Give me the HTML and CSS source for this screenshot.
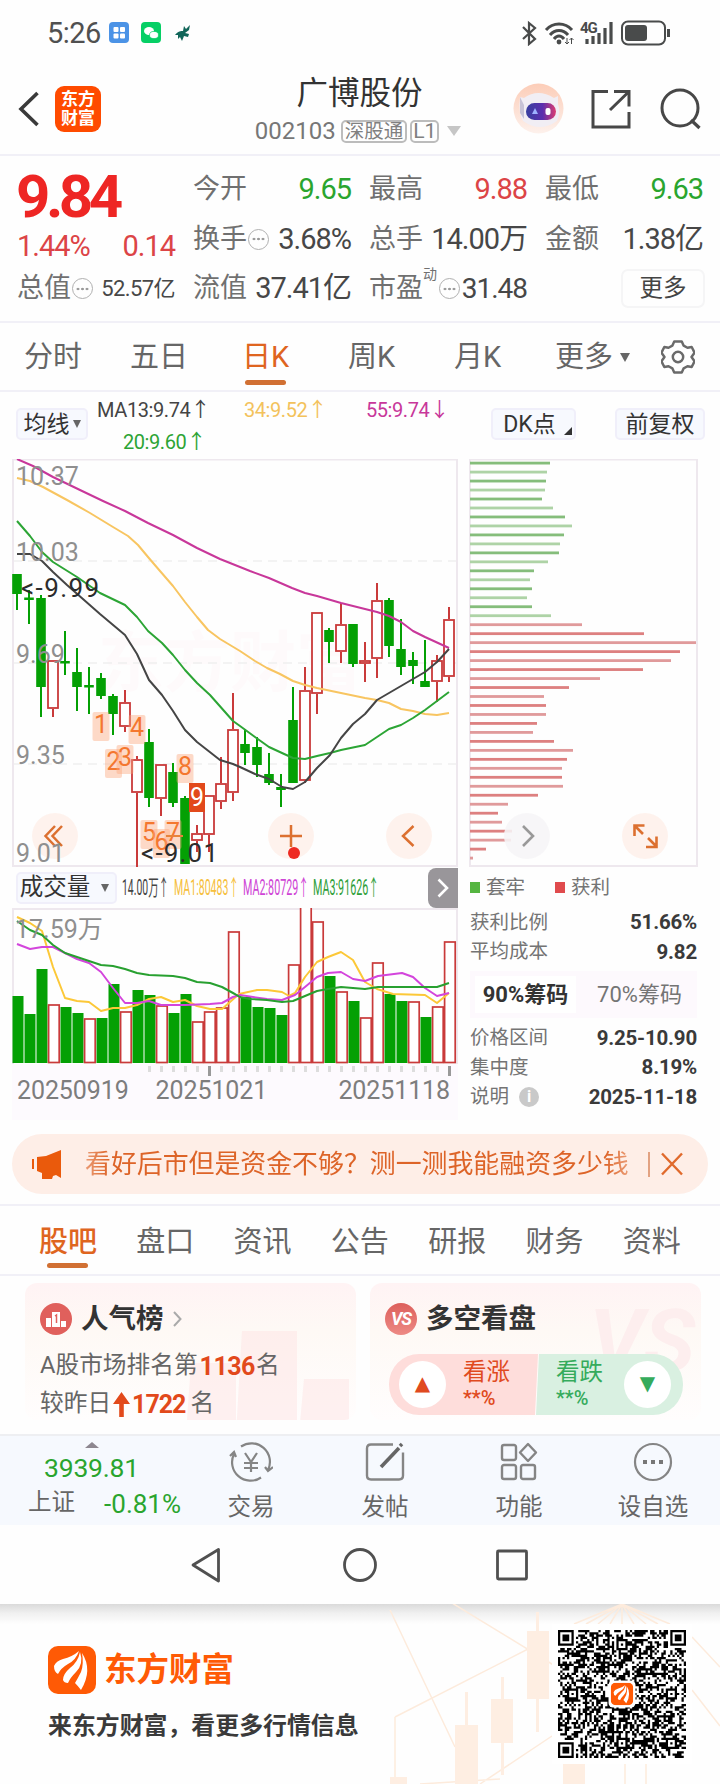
FILE: index.html
```html
<!DOCTYPE html>
<html lang="zh-CN">
<head>
  <meta charset="UTF-8">
  <meta name="viewport" content="width=device-width, initial-scale=1.0">
  <title>广博股份 002103</title>
  <link rel="stylesheet" href="styles.css">
</head>
<body>
  <div class="status">
    <span class="time">5:26</span>
    <svg class="app-icons" width="84" height="24" viewBox="0 0 84 24">
      <rect x="0" y="1" width="20" height="21" rx="4" fill="#4b93e6"/>
      <g fill="#fff"><rect x="4.500" y="6" width="5" height="5" rx="1"/><rect x="11" y="6" width="5" height="5" rx="1"/><rect x="4.500" y="12.500" width="5" height="5" rx="1"/><rect x="11" y="12.500" width="5" height="5" rx="1"/></g>
      <rect x="32" y="1" width="20" height="21" rx="4" fill="#06cf65"/>
      <ellipse cx="40" cy="10" rx="5" ry="4" fill="#fff"/><ellipse cx="45" cy="14" rx="4.500" ry="3.600" fill="#fff" stroke="#06cf65" stroke-width=".7"/>
      <path d="M66 14c3-4 6-4 8-4l1-5 2 3 4-4-1 5-4 3 4 1-1 3-4-1-2 5-2-4-2 2v-4z" fill="#12665a"/>
    </svg>
    <svg class="signal" width="150" height="26" viewBox="522 19 150 26" fill="none" stroke="#494b4b">
      <path d="M523 26l12 12-6 5V22l6 5-12 11" stroke-width="2.200"/>
      <path d="M546 29c7-8 19-8 26 0M550 34c5-6 13-6 18 0M554 38c3-4 7-4 10 0" stroke-width="3"/>
      <circle cx="559" cy="41" r="2.400" fill="#494b4b" stroke="none"/>
      <path d="M567 37v6m-2-2l2 2 2-2M571.500 43v-6m-2 2l2-2 2 2" stroke-width="1"/>
      <text x="580" y="32" class="net">4G</text>
      <path d="M587 43v-5M593 43v-8M599 43v-11M605 43V27M611 43V21" stroke-width="3.200"/>
      <rect x="622" y="20.500" width="43" height="23" rx="6" stroke-width="2"/>
      <rect x="625" y="24" width="22" height="16" rx="3" fill="#494b4b" stroke="none"/>
      <path d="M668.500 28v8" stroke-width="3"/>
    </svg>
  </div>

  <header class="header">
    <svg class="back" width="22" height="36" viewBox="0 0 22 36"><path d="M19.500 2L3 18l16.500 16" fill="none" stroke="#3a3a3a" stroke-width="3.600"/></svg>
    <div class="app-logo"><span>东方</span><span>财富</span></div>
    <div class="title">
      <h1>广博股份</h1>
      <div class="code"><span>002103</span><i>深股通</i><i class="level">L1</i><b class="caret"></b></div>
    </div>
    <svg class="actions" width="188" height="52" viewBox="513 84 188 52" fill="none" stroke="#474747">
      <defs>
        <linearGradient id="halo" x1="0" y1="0" x2="0" y2="1"><stop offset="0" stop-color="#fccdb8"/><stop offset="1" stop-color="#fdf1ec"/></linearGradient>
        <linearGradient id="visor"><stop offset="0" stop-color="#37409f"/><stop offset=".55" stop-color="#5b2fae"/><stop offset="1" stop-color="#dd3d70"/></linearGradient>
      </defs>
      <g stroke="none">
        <circle cx="538.500" cy="109.500" r="25" fill="url(#halo)"/>
        <path d="M520 98l4 1q14-10 30 0l4-2 0 8q3 8-1 17-17 12-34 0-5-8-3-24z" fill="#f1eef4"/>
        <path d="M520 98l4 8 0 14-4-6z" fill="#c7c3d6"/>
        <rect x="526" y="104" width="30" height="17" rx="8.500" fill="url(#visor)"/>
        <path d="M532 115l3-6 3 6z" fill="#9db2ff"/><rect x="545.500" y="109" width="5" height="7" rx="2" fill="#fff"/>
      </g>
      <path d="M608 92.500h-15v35.500h36v-15M614 92.500h15v15M629 92.500L610 111" stroke-width="3"/>
      <circle cx="680" cy="109" r="18" stroke-width="3"/>
      <path d="M691 121l8.500 8" stroke-width="3.200"/>
    </svg>
  </header>

  <section class="quote">
    <div class="cell price red">9.84</div>
    <div class="cell"><span>今开</span><em class="green">9.65</em></div>
    <div class="cell"><span>最高</span><em class="red">9.88</em></div>
    <div class="cell"><span>最低</span><em class="green">9.63</em></div>
    <div class="cell change"><em class="red">1.44%</em><em class="red">0.14</em></div>
    <div class="cell"><span>换手<u class="tip"></u></span><em>3.68%</em></div>
    <div class="cell"><span>总手</span><em>14.00万</em></div>
    <div class="cell"><span>金额</span><em>1.38亿</em></div>
    <div class="cell small"><span>总值<u class="tip"></u></span><em>52.57亿</em></div>
    <div class="cell"><span>流值</span><em>37.41亿</em></div>
    <div class="cell"><span>市盈<sup>动</sup><u class="tip"></u></span><em class="pe">31.48</em></div>
    <div class="cell end"><button class="more">更多</button></div>
  </section>

  <nav class="periods">
    <a>分时</a>
    <a>五日</a>
    <a class="on">日K</a>
    <a>周K</a>
    <a>月K</a>
    <a class="drop">更多<b class="caret"></b></a>
    <svg width="34" height="38" viewBox="-18 -19 36 38" fill="none" stroke="#6a6a6a" stroke-width="2.600" stroke-linejoin="round">
      <path d="M-4-16.500h8l2 4.500 4 2.200 4.500-.8 3 6-3.200 4.600 3.200 4.600-3 6-4.500-.8-4 2.200-2 4.500h-8l-2-4.500-4-2.200-4.500.8-3-6 3.200-4.600-3.200-4.600 3-6 4.500.8 4-2.200z"/>
      <circle r="5.500"/>
    </svg>
  </nav>

  <div class="averages">
    <button class="pill">均线<b class="caret"></b></button>
    <div class="ma-list">
      <span>MA13:9.74↑</span>
      <span class="ma34">34:9.52↑</span>
      <span class="ma55">55:9.74↓</span>
      <span class="ma20">20:9.60↑</span>
    </div>
    <button class="pill dk">DK点<b class="corner"></b></button>
    <button class="pill">前复权</button>
  </div>

  <main class="charts">
    <div class="left">
      <svg id="kline" width="446" height="408" viewBox="12 459 446 408"></svg>
      <div class="vol-head">
        <button class="pill">成交量<b class="caret"></b></button>
        <svg class="vol-ma" width="260" height="28" viewBox="120 875 260 28">
          <text x="122" y="896" textLength="47" lengthAdjust="spacingAndGlyphs" fill="#444">14.00万↑</text>
          <text x="174" y="896" textLength="65" lengthAdjust="spacingAndGlyphs" fill="#f6bf3c">MA1:80483↑</text>
          <text x="243" y="896" textLength="66" lengthAdjust="spacingAndGlyphs" fill="#cf45d6">MA2:80729↑</text>
          <text x="313" y="896" textLength="66" lengthAdjust="spacingAndGlyphs" fill="#2fa03a">MA3:91626↑</text>
        </svg>
        <div class="next"><svg width="12" height="20" viewBox="0 0 12 20"><path d="M1.500 1.500L10 10l-8.500 8.500" fill="none" stroke="#fff" stroke-width="2.600"/></svg></div>
      </div>
      <svg id="volume" width="446" height="156" viewBox="12 908 446 156"></svg>
      <div class="axis">
        <svg id="ticks" width="446" height="14" viewBox="12 1064 446 14"></svg>
        <div class="dates"><span>20250919</span><span>20251021</span><span>20251118</span></div>
      </div>
    </div>

    <div class="right">
      <svg id="chips" width="229" height="408" viewBox="469 459 229 408"></svg>
      <div class="legend"><i class="sq sq-green"></i>套牢<i class="sq sq-red"></i>获利</div>
      <div class="row"><span>获利比例</span><strong>51.66%</strong></div>
      <div class="row"><span>平均成本</span><strong>9.82</strong></div>
      <div class="switch"><span class="active">90%筹码</span><span>70%筹码</span></div>
      <div class="row"><span>价格区间</span><strong>9.25-10.90</strong></div>
      <div class="row"><span>集中度</span><strong>8.19%</strong></div>
      <div class="row"><span>说明<b class="info">i</b></span><strong>2025-11-18</strong></div>
    </div>
  </main>

  <div class="notice">
    <svg width="32" height="32" viewBox="0 0 32 32" fill="#ea5a0c"><path d="M1 11h2v10H1zM6 9l9-1 15-6v28l-5-3-3 1-1 3H11v-6l-5-2z"/></svg>
    <p>看好后市但是资金不够？测一测我能融资多少钱</p>
    <i class="bar"></i>
    <svg class="close" width="22" height="24" viewBox="0 0 22 24"><path d="M1 1.500l20 21M21 1.500l-20 21" stroke="#e06a2c" stroke-width="2.400"/></svg>
  </div>

  <nav class="tabs">
    <a class="on">股吧</a><a>盘口</a><a>资讯</a><a>公告</a><a>研报</a><a>财务</a><a>资料</a>
  </nav>

  <section class="cards">
    <div class="card rank">
      <svg class="ghost" width="190" height="137" viewBox="0 0 190 137"><path d="M25 66h45v71H20zM76 34h55v103H70zM138 82h45v55h-50z" fill="#fde4e3" opacity=".5"/></svg>
      <h2>
        <svg width="32" height="32" viewBox="0 0 32 32"><circle cx="16" cy="16" r="16" fill="#e0605c"/><path d="M6 15h5v9H6zM12 9h8v15h-8zM21 18h5v6h-5z" fill="#fff"/><path d="M15 13l1.500-1v8" fill="none" stroke="#e0605c" stroke-width="1.500"/></svg>
        人气榜
        <svg class="arrow" width="9" height="16" viewBox="0 0 9 16"><path d="M1 1l6.500 7L1 15" fill="none" stroke="#aaa" stroke-width="2"/></svg>
      </h2>
      <p>A股市场排名第<b>1136</b>名</p>
      <p class="delta">较昨日<svg width="17" height="25" viewBox="0 0 17 25"><path d="M8.500 0L17 12h-6.200v13H6.200V12H0z" fill="#e2491b"/></svg><b>1722</b>名</p>
    </div>
    <div class="card">
      <span class="ghost ghost-vs">VS</span>
      <h2><span class="vs">VS</span>多空看盘</h2>
      <div class="vote">
        <div class="up"><i>▲</i><span>看涨<small>**%</small></span></div>
        <div class="down"><span>看跌<small>**%</small></span><i>▼</i></div>
      </div>
    </div>
  </section>

  <div class="toolbar">
    <div class="index">
      <b class="caret-up"></b>
      <span class="green">3939.81</span>
      <div><span>上证</span><span class="green">-0.81%</span></div>
    </div>
    <div class="tool">
      <svg width="44" height="40" viewBox="-22 -20 44 40" fill="none" stroke="#858585" stroke-width="2.200">
        <path d="M-10-15.500A18.500 18.500 0 0 1 17 8M10 15.500A18.500 18.500 0 0 1-17-8M22 5l-5 4-3-4M-21-6l4-4 2 5"/>
        <path d="M-6-9l6 9 6-9M0 0v10M-7 1h14M-7 6h14"/>
      </svg>
      交易
    </div>
    <div class="tool">
      <svg width="44" height="40" viewBox="-22 -20 44 40" fill="none" stroke="#858585" stroke-width="2.400">
        <path d="M8-17.500h-22q-4 0-4 4v27q0 4 4 4h28q4 0 4-4v-23"/>
        <path d="M-4 5L14-14" stroke="#666" stroke-width="3.600"/><path d="M15-16l2-2" stroke="#666" stroke-width="3.600"/>
      </svg>
      发帖
    </div>
    <div class="tool">
      <svg width="44" height="40" viewBox="-22 -20 44 40" fill="none" stroke="#858585" stroke-width="2.400">
        <rect x="-17" y="-17" width="14" height="15" rx="2"/><rect x="-17" y="3" width="14" height="14" rx="2"/><rect x="2" y="3" width="14" height="14" rx="2"/>
        <path d="M9-18l8 8.500-8 8.500-8-8.500z" stroke-linejoin="round"/>
      </svg>
      功能
    </div>
    <div class="tool">
      <svg width="44" height="40" viewBox="-22 -20 44 40"><circle r="18" fill="none" stroke="#858585" stroke-width="2.200"/><path d="M-10-2h4v4h-4zM-2-2h4v4h-4zM6-2h4v4h-4z" fill="#777"/></svg>
      设自选
    </div>
  </div>

  <div class="sysnav">
    <svg width="340" height="40" viewBox="190 1545 340 40" fill="none" stroke="#505050" stroke-width="2.800" stroke-linejoin="round">
      <path d="M218.500 1549.500v31.500L193 1565z"/>
      <circle cx="360" cy="1565" r="15.500"/>
      <rect x="497.500" y="1551" width="29" height="28" rx="1"/>
    </svg>
  </div>

  <footer class="footer">
    <svg class="decor" width="340" height="180" viewBox="380 1604 340 180">
      <g fill="none" stroke="#fdebdc" stroke-width="1.500">
        <path d="M452 1603L560 1669M395 1717L530 1648M480 1784L552 1736M390 1610L455 1747M395 1717v67M692 1690l28 36M692 1637l28 30M420 1784l80-5M625 1764v20M646 1764v20"/>
        <path d="M622 1604l-48 20M622 1604l-36 20M622 1604l-24 20M622 1604l-12 20M622 1604v20M622 1604l12 20M622 1604l24 20M622 1604l36 20M622 1604l48 20"/>
      </g>
      <g fill="#feeee2">
        <path d="M455 1725h23v59h-23zM465 1692h3v33h-3zM491 1699h22v44h-22zM501 1677h3v98h-3zM527 1631h22v68h-22zM536 1612h3v120h-3zM563 1764h22v20h-22zM390 1777h17v7h-17z"/>
      </g>
    </svg>
    <div class="brand">
      <div class="brand-name">
        <svg width="48" height="48" viewBox="0 0 48 48"><use href="#mark"/></svg>
        <strong>东方财富</strong>
      </div>
      <p>来东方财富，看更多行情信息</p>
    </div>
    <div class="qr">
      <svg width="128" height="128" viewBox="0 0 57 57">
        <defs>
          <g id="mark">
            <rect width="48" height="48" rx="10" fill="#ff5a05"/>
            <path d="M6 20q2-5 9-7 9-2 16-8-3 9-11 13-7 4-10 10-4-2-4-8zM15 34q0-6 7-12 8-6 10-16 4 12-4 20-6 6-8 11-4 0-5-3zM27 37q3-5 6-11 3-8 1-19 11 17-1 37-3-4-6-7z" fill="#fff"/>
          </g>
        </defs>
        <path id="qr-code"/>
        <rect x="22.500" y="22.500" width="12" height="12" rx="2" fill="#fff"/>
        <svg x="23.500" y="23.500" width="10" height="10" viewBox="0 0 48 48"><use href="#mark"/></svg>
      </svg>
    </div>
  </footer>

  <script src="script.js"></script>
</body>
</html>
```

FILE: styles.css
```css
* {
    box-sizing: border-box;
}

body {
    width: 720px;
    margin: 0;
    background: #fefefe;
    color: #444;
    font-family: Roboto, "Noto Sans CJK SC", sans-serif;
    line-height: 1;
}

h1, h2, p {
    margin: 0;
    font-weight: normal;
}

i, em {
    font-style: normal;
}

button {
    padding: 0;
    border: 0;
    background: none;
    color: inherit;
    font: inherit;
}

svg {
    display: block;
    flex: none;
}

.red { color: #dc4446; }
.green { color: #2aa52e; }

.caret {
    border: 5px solid transparent;
    border-top: 9px solid #666;
    border-bottom: 0;
}

/* status bar */

.status {
    display: flex;
    align-items: center;
    height: 60px;
    padding: 6px 48px 0 47px;
}

.time {
    width: 62px;
    font-size: 29px;
    letter-spacing: -0.5px;
    color: #505050;
}

.signal {
    margin-left: auto;
}

.net {
    fill: #494b4b;
    stroke: none;
    font-size: 15px;
    font-weight: bold;
    letter-spacing: -1px;
}

/* header */

.header {
    display: flex;
    align-items: center;
    height: 96px;
    padding: 3px 19px 0 18px;
    border-bottom: 2px solid #f1f0f7;
}

.app-logo {
    display: flex;
    flex-direction: column;
    justify-content: center;
    width: 46px;
    height: 46px;
    margin-left: 15px;
    border-radius: 9px;
    background: #ff4b00;
    color: #fff;
    font-size: 17px;
    font-weight: bold;
    line-height: 19px;
    text-align: center;
}

.title {
    display: flex;
    flex-direction: column;
    align-items: center;
    flex: 1;
    padding: 7px 1px 0 106px;
}

.title h1 {
    font-size: 31.5px;
    line-height: 38px;
    color: #333;
}

.code {
    display: flex;
    align-items: center;
    height: 36px;
    margin-left: -3px;
    font-size: 24px;
    color: #777;
}

.code span {
    margin-right: 5px;
}

.code i {
    height: 23px;
    margin-right: 3px;
    padding: 0 2px;
    border: 2px solid #bcbcbc;
    border-radius: 5px;
    font-size: 19.5px;
    line-height: 19px;
    color: #808080;
}

.code .level {
    padding: 0 1px;
    font-size: 21px;
}

.code .caret {
    margin-left: 5px;
    border-width: 10px 7px 0;
    border-top-color: #c6c6c6;
}

/* quote */

.quote {
    display: grid;
    grid-template-columns: repeat(4, 158px);
    grid-template-rows: repeat(3, 49.5px);
    column-gap: 18px;
    height: 167px;
    padding: 9px 17px 0;
    border-bottom: 2px solid #f1f0f7;
}

.cell {
    display: flex;
    align-items: center;
    justify-content: space-between;
    white-space: nowrap;
    font-size: 27px;
    color: #707070;
}

.cell span {
    display: flex;
    align-items: center;
}

.cell em {
    font-size: 29px;
    letter-spacing: -1px;
    color: #474747;
}

.cell em.red { color: #dc4446; }
.cell em.green { color: #2aa52e; }

.cell.price {
    padding-top: 15px;
    font-size: 60px;
    font-weight: 700;
    letter-spacing: -4.5px;
    text-indent: -1px;
    color: #ee2624;
}

.cell.change {
    padding-top: 14px;
}

.cell.small em {
    font-size: 22px;
    letter-spacing: -0.6px;
}

.cell.end {
    justify-content: flex-end;
}

.cell .pe {
    font-size: 28px;
}

.cell sup {
    align-self: flex-start;
    margin-top: -8px;
    font-size: 14px;
    line-height: 14px;
}

.tip {
    width: 21px;
    height: 21px;
    margin: 0 0 0 1px;
    border: 1.500px solid #b0b0b0;
    border-radius: 50%;
    background: radial-gradient(circle, #999 1px, transparent 1.600px) center / 4.500px 18px repeat-x content-box;
    padding: 0 2px;
}

.cell sup + .tip {
    margin-left: 2px;
}

.more {
    width: 84px;
    height: 39px;
    margin-right: -2px;
    border: 2px solid #f5f5f6;
    border-radius: 7px;
    font-size: 23.5px;
    color: #444;
}

/* period tabs */

.periods {
    display: flex;
    align-items: center;
    height: 69px;
    padding: 1px 0 0 24px;
    border-bottom: 2px solid #f1f0f7;
    font-size: 29px;
    color: #666;
}

.periods a {
    position: relative;
    width: 106px;
    padding-top: 1px;
}

.periods a:nth-child(2) {
    width: 112px;
}

.periods a:nth-child(5) {
    width: 101px;
}

.periods .drop {
    display: flex;
    align-items: center;
    gap: 7px;
}

.on {
    color: #df651f;
}

.periods .on::after,
.tabs .on::after {
    content: "";
    position: absolute;
    left: 3px;
    bottom: -13px;
    width: 41px;
    height: 5px;
    border-radius: 3px;
    background: #d17033;
}

/* moving average row */

.averages {
    display: flex;
    align-items: flex-start;
    height: 67px;
    padding: 16px 15px 0 16px;
}

.pill {
    display: flex;
    align-items: center;
    justify-content: center;
    gap: 3px;
    width: 72px;
    height: 32px;
    border: 2px solid #f0effa;
    border-radius: 5px;
    background: #f7f9fe;
    font-size: 23px;
    color: #333;
    white-space: nowrap;
}

.pill .caret {
    border-width: 8px 4px 0;
}

.averages .pill:last-child {
    width: 90px;
}

.averages .dk {
    position: relative;
    width: 85px;
    margin-right: 39px;
    padding-right: 8px;
}

.corner {
    position: absolute;
    right: 2px;
    bottom: 3px;
    border-left: 8px solid transparent;
    border-bottom: 8px solid #333;
}

.ma-list {
    display: grid;
    grid-template-columns: 109px 121px 122px;
    row-gap: 12px;
    width: 394px;
    margin: -8px 0 0 9px;
    font-size: 20px;
    letter-spacing: -0.4px;
    text-align: right;
    white-space: nowrap;
}

.ma34 { color: #f3c25c; }
.ma55 { color: #c8379a; }
.ma20 { color: #2da435; }

/* charts */

.charts {
    display: flex;
    gap: 11px;
    height: 661px;
    padding-left: 12px;
}

.left {
    width: 446px;
}

.frame {
    fill: none;
    stroke: #eee8ee;
    stroke-width: 2;
}

.grid {
    stroke: #efefef;
    stroke-width: 1.500;
    stroke-dasharray: 9 6;
}

.watermark {
    fill: #fefafb;
    font-size: 66px;
    font-weight: bold;
}

.line {
    fill: none;
    stroke-width: 2;
    stroke-linejoin: round;
}

.label {
    fill: #8f8f8f;
    font-size: 25px;
}

.mark {
    fill: #2c2c2c;
    font-size: 26px;
}

.count {
    font-size: 25px;
    text-anchor: middle;
}

.vol-head {
    display: flex;
    align-items: center;
    height: 41px;
    padding-left: 4px;
}

.vol-head .pill {
    width: 101px;
    gap: 11px;
    padding-right: 4px;
    font-size: 23.5px;
}

.vol-ma {
    margin-left: 3px;
    overflow: visible;
    font-size: 22px;
}

.next {
    display: flex;
    align-items: center;
    justify-content: center;
    width: 30px;
    height: 40px;
    margin-left: auto;
    border-radius: 8px 0 0 8px;
    background: #99969a;
}

.axis {
    height: 56px;
    background: #fdfafe;
}

.dates {
    display: flex;
    padding: 0 0 0 5px;
    font-size: 25px;
    letter-spacing: -0.1px;
    color: #7d7d7d;
}

.dates span:nth-child(2) {
    margin-left: 27px;
}

.dates span:last-child {
    margin-left: auto;
    padding-right: 8px;
}

.right {
    width: 229px;
    font-size: 19.500px;
    color: #747474;
}

.legend {
    display: flex;
    align-items: center;
    height: 41px;
    padding-left: 1px;
}

.sq {
    width: 10px;
    height: 11px;
    margin-right: 6px;
}

.sq-green { background: #55b541; }
.sq-red { margin-left: 30px; background: #e04b4d; }

.row {
    display: flex;
    align-items: center;
    justify-content: space-between;
    height: 29.300px;
    padding: 0 1px;
}

.row strong {
    font-size: 20.5px;
    letter-spacing: -0.200px;
    color: #3a3a3a;
}

.row span {
    display: flex;
    align-items: center;
}

.info {
    width: 20px;
    height: 20px;
    margin-left: 10px;
    border-radius: 50%;
    background: #c9c9c9;
    color: #fff;
    font-size: 16px;
    line-height: 20px;
    text-align: center;
}

.switch {
    display: flex;
    align-items: center;
    height: 47px;
    margin: 4px 1px 6px;
    padding: 4px 5px;
    background: #fdf9fd;
    font-size: 22px;
}

.switch span {
    width: 116px;
    line-height: 37px;
    text-align: center;
}

.switch span + span {
    padding-left: 11px;
    white-space: nowrap;
}

.switch .active {
    width: 101px;
    background: #fff;
    color: #333;
    font-weight: bold;
}

/* notice */

.notice {
    display: flex;
    align-items: center;
    height: 60px;
    margin: 14px 12px 10px;
    padding-left: 19px;
    border-radius: 30px;
    background: #feeee7;
    color: #dd6428;
}

.notice p {
    width: 555px;
    margin-left: 22px;
    overflow: hidden;
    font-size: 25.900px;
    line-height: 40px;
    white-space: nowrap;
    -webkit-mask-image: linear-gradient(90deg, rgba(0, 0, 0, .6), #000 24px, #000 520px, rgba(0, 0, 0, .4));
    mask-image: linear-gradient(90deg, rgba(0, 0, 0, .6), #000 24px, #000 520px, rgba(0, 0, 0, .4));
}

.bar {
    width: 2px;
    height: 25px;
    margin: 0 11px 0 8px;
    background: #e2a282;
}

/* content tabs */

.tabs {
    display: flex;
    align-items: center;
    height: 72px;
    padding: 4px 0 0 39px;
    border-top: 2px solid #f1f0f7;
    border-bottom: 2px solid #f1f0f7;
    font-size: 29px;
    color: #666;
}

.tabs a {
    position: relative;
    width: 97.600px;
}

.tabs .on {
    color: #df651f;
    font-weight: 500;
}

.tabs .on::after {
    left: 8px;
    bottom: -11px;
}

/* cards */

.cards {
    display: flex;
    gap: 14px;
    height: 158px;
    padding: 7px 18px 0 25px;
}

.card {
    position: relative;
    width: 331px;
    height: 137px;
    padding: 20px 15px 0;
    overflow: hidden;
    border-radius: 12px;
    background: linear-gradient(#fff3f4, #fef9f5 35%, #fffdfd);
}

.card > * {
    position: relative;
}

.card .ghost {
    position: absolute;
    right: 0;
    top: 14px;
}

.card .ghost-vs {
    right: 6px;
    top: 16px;
    color: #fdeeee;
    font-size: 86px;
    font-style: italic;
    font-weight: bold;
}

.card h2 {
    display: flex;
    align-items: center;
    height: 32px;
    gap: 9px;
    font-size: 27.500px;
    font-weight: bold;
    color: #333;
}

.card p {
    display: flex;
    align-items: center;
    height: 38px;
    margin-top: 12px;
    font-size: 23.700px;
    color: #666;
    white-space: nowrap;
}

.card .delta {
    margin-top: 0;
}

.card p b {
    padding: 0 1px 0 2px;
    font-size: 25px;
    letter-spacing: -0.5px;
    color: #e2491b;
}

.card .delta b {
    padding-right: 5px;
    letter-spacing: -1px;
}

.card .delta svg {
    margin-left: 2px;
}

.vs {
    width: 32px;
    height: 32px;
    border-radius: 50%;
    background: linear-gradient(#dd5f5b, #ed8a85);
    color: #fff;
    font-size: 18px;
    font-style: italic;
    line-height: 32px;
    text-align: center;
    letter-spacing: -1px;
}

.vote {
    display: flex;
    height: 61px;
    margin: 19px -1px 0 4px;
    width: 294px;
}

.up, .down {
    display: flex;
    align-items: center;
    font-size: 23.500px;
}

.up {
    width: 149px;
    padding-left: 10px;
    gap: 17px;
    border-radius: 30px 0 0 30px;
    background: #fedddb;
    clip-path: polygon(0 0, 100% 0, 146px 100%, 0 100%);
    color: #e04a20;
}

.down {
    width: 148px;
    margin-left: -3px;
    padding-left: 21px;
    gap: 21px;
    border-radius: 0 30px 30px 0;
    background: #d9f0e1;
    clip-path: polygon(4px 0, 100% 0, 100% 100%, 1px 100%);
    color: #35ab5c;
}

.vote i {
    width: 47px;
    height: 47px;
    border-radius: 50%;
    background: #fff;
    font-family: "DejaVu Sans", sans-serif;
    font-size: 20px;
    line-height: 45px;
    text-align: center;
}

.vote small {
    display: block;
    margin-top: 3px;
    font-size: 20px;
    font-weight: 500;
}

/* bottom toolbar */

.toolbar {
    display: flex;
    height: 91px;
    border-top: 2px solid #eeeff2;
    background: #f6f9fe;
    font-size: 23.500px;
    color: #666;
}

.index {
    display: flex;
    flex-direction: column;
    width: 184px;
    padding: 6px 3px 0 28px;
}

.caret-up {
    width: 0;
    margin-left: 57px;
    border: 7px solid transparent;
    border-top: 0;
    border-bottom: 6px solid #8d8790;
}

.index > span {
    margin: 7px 0 0 16px;
    font-size: 26.5px;
    letter-spacing: -0.2px;
}

.index div {
    display: flex;
    justify-content: space-between;
    margin-top: 9px;
}

.index div .green {
    font-size: 26px;
}

.tool {
    display: flex;
    flex-direction: column;
    align-items: center;
    width: 134px;
    gap: 14px;
    padding-top: 6px;
}

.sysnav {
    display: flex;
    align-items: center;
    justify-content: center;
    height: 79px;
}

/* footer */

.footer {
    position: relative;
    display: flex;
    justify-content: space-between;
    height: 180px;
    padding: 20px 28px 0 48px;
    background: linear-gradient(#dadada, #f0f0f0 9px, #fefefe 20px);
}

.decor {
    position: absolute;
    right: 0;
    top: 0;
}

.brand {
    padding-top: 22px;
}

.brand-name {
    display: flex;
    align-items: center;
    gap: 8px;
    color: #ff5a05;
    font-size: 32.500px;
}

.brand p {
    margin-top: 21px;
    font-size: 23.900px;
    font-weight: bold;
    color: #3a3a3a;
}

.qr {
    position: relative;
    width: 140px;
    height: 140px;
    padding: 6px;
    background: #fff;
}
```

FILE: script.js
```javascript
const RED = '#c93a3a';
const GREEN = '#04a004';

const x = i => 17 + i * 12;

// rising, high, body top, body bottom, low
const candles = [
  [0, 574, 574, 594, 610], [0, 590, 597.5, 600, 624], [0, 595, 598, 687, 717], [1, 660, 660, 709, 717],
  [0, 631, 661, 663.5, 675], [0, 648, 672, 687, 711], [0, 667, 685, 687.5, 714], [0, 673, 678, 696, 699],
  [0, 694, 696, 714, 735], [1, 690, 702, 727, 732], [1, 756, 759, 793, 867], [0, 729, 742, 798, 807],
  [1, 764, 764, 799, 816], [0, 763, 772, 803, 807], [0, 796, 798, 864, 864], [1, 825, 833, 841, 852],
  [1, 795, 795, 835, 852], [1, 757, 783, 802, 809], [1, 693, 729, 793, 801], [0, 729, 744, 753, 765],
  [0, 737, 747, 765, 777], [0, 753, 774, 783, 785], [0, 774, 787, 790, 807], [0, 687, 720, 783, 783],
  [1, 667, 690, 781, 783], [1, 612, 612, 694, 714], [0, 628, 630, 642, 663], [1, 603, 624, 652, 663],
  [0, 624, 624, 664, 667], [1, 642, 660, 664, 682], [1, 583, 600, 659, 678], [0, 598, 600, 646, 657],
  [0, 619, 649, 667, 675], [0, 652, 660, 666, 684], [0, 640, 681, 687, 687], [1, 655, 660, 682, 702],
  [1, 607, 619, 677, 682]
];

const averages = {
  '#c8379a': '17,459 33,466 53,477 80,490 103,501 125,511 148,523 173,535 197,548 220,559 240,567 250,571 269,578 292,588 305,593 317,596 341,603 353,606 377,612 389,616 401,622 413,631 425,637 449,648',
  '#f8c561': '17,478 30,481 43,487 67,500 90,513 113,527 128,536 138,545 148,557 160,571 173,586 185,602 197,617 208,630 220,639 240,651 255,661 267,668 280,674 293,681 305,685 317,688 341,693 365,698 377,700 389,703 401,709 413,711 425,714 437,715 449,713',
  '#2ca535': '17,521 30,536 42,552 53,562 77,577 100,593 125,605 137,617 148,631 162,643 173,655 185,670 197,683 210,695 233,721 240,726 255,737 269,747 282,753 293,758 305,759 317,756 330,753 341,750 365,745 377,737 389,729 401,725 413,718 425,710 437,701 449,692',
  '#454545': '17,554 30,554 42,561 53,572 67,585 100,614 125,635 137,654 149,680 162,695 173,711 185,730 197,742 220,760 233,764 240,767 255,774 269,779 282,787 293,789 305,782 317,768 330,755 341,738 353,724 365,714 377,700 389,693 401,686 413,679 425,672 437,662 449,649'
};

// rising, top
const volumes = [
  [0, 996], [0, 1014], [0, 969], [1, 1004], [0, 1007], [0, 1013], [1, 1018], [0, 1018], [0, 984], [1, 1011],
  [0, 990], [0, 995], [1, 1005], [0, 1013], [0, 994], [1, 1021], [1, 1011], [1, 1007], [1, 931], [0, 997],
  [0, 1007], [0, 1008], [0, 1015], [1, 964], [1, 900], [1, 921], [0, 976], [1, 991], [0, 1001], [1, 1017],
  [1, 962], [0, 994], [0, 1001], [1, 1001], [0, 1017], [1, 1006], [1, 941]
];

const volumeAverages = {
  '#fcc838': '17,917 30,923 42,931 53,967 65,998 77,1001 89,1002 101,1011 113,1008 125,1008 137,1005 149,999 161,997 173,1002 185,1000 197,1006 210,1009 222,1009 230,1002 239,994 257,990 267,990 282,992 289,996 295,993 305,977 317,962 328,957 341,952 353,960 365,982 377,989 393,994 425,995 437,1003 449,993',
  '#d345dc': '17,944 30,949 42,947 53,947 65,953 77,959 89,963 101,972 113,988 125,1003 137,1003 149,1001 161,1005 185,1005 210,1004 222,1003 233,997 240,995 253,997 267,999 282,1000 295,995 305,987 317,977 328,973 341,972 353,979 365,981 378,976 402,973 413,977 425,988 437,996 449,993',
  '#28a030': '17,921 30,930 42,935 53,945 65,953 77,957 101,965 113,966 125,969 137,973 149,975 173,976 185,978 197,982 210,983 222,987 233,993 240,997 250,999 267,1000 282,1002 293,1001 317,991 328,989 341,987 365,989 378,987 437,987 449,983'
};

// bar lengths, trapped chips first
const trapped = [80, 77, 76, 75, 72, 83, 95, 102, 94, 90, 89, 78, 64, 60, 62, 57, 62, 81];
const profit = [112, 174, 226, 210, 201, 173, 130, 99, 74, 76, 76, 67, 63, 84, 103, 97, 92, 92, 93, 68, 38, 28, 32, 42, 41, 16, 3];

const lines = set => Object.entries(set)
  .map(([color, points]) => `<polyline class="line" stroke="${color}" points="${points}"/>`).join('');

function button(cx, inner, fill = '#fef0ea') {
  return `<circle cx="${cx}" cy="836" r="23" fill="${fill}" fill-opacity=".88"/>${inner}`;
}

function drawKline() {
  let out = '<text class="watermark" x="98" y="686">东方财富</text>';
  [561, 663, 764].forEach(y => {
    out += `<path class="grid" d="M13 ${y}h444"/>`;
  });
  out += '<rect class="frame" x="13" y="459.5" width="444" height="406.500"/>';

  candles.forEach(([up, high, top, bottom, low], i) => {
    const c = x(i);
    const h = Math.max(bottom - top, 2);
    if (up) {
      out += `<path d="M${c} ${high}V${top}M${c} ${bottom}V${low}" stroke="${RED}" stroke-width="2"/>`;
      out += `<rect x="${c - 5}" y="${top + 1}" width="10" height="${Math.max(h - 2, 1)}" fill="#fff" stroke="${RED}" stroke-width="1.800"/>`;
    } else {
      out += `<path d="M${c} ${high}V${low}" stroke="${GREEN}" stroke-width="2"/>`;
      out += `<rect x="${c - 4.8}" y="${top}" width="9.600" height="${h}" fill="${GREEN}"/>`;
    }
  });
  out += lines(averages);

  // sequence counters 1-9
  [[1, 101, 733], [2, 113.5, 770], [3, 125, 766], [4, 137, 736], [5, 149, 841], [6, 161.5, 850], [7, 173, 841], [8, 185, 775]].forEach(([n, cx, y]) => {
    out += `<rect x="${cx - 8.5}" y="${y - 21}" width="17" height="29" rx="2" fill="#fda67c" fill-opacity=".42"/>`;
    out += `<text class="count" x="${cx}" y="${y}" fill="#f4772f">${n}</text>`;
  });
  out += '<path d="M166 836h17" stroke="#e8823a" stroke-width="2"/>';
  out += '<rect x="189" y="783" width="16" height="29" fill="#e2491b"/><text class="count" x="197" y="806" fill="#fff">9</text>';
  out += '<text class="mark" x="21" y="597" textLength="78">&lt;-9.99</text><text class="mark" x="141" y="862" textLength="77">&lt;-9.01</text>';

  const stroke = 'fill="none" stroke="#dc7030" stroke-width="2.500"';
  out += button(55, `<path d="M55 826l-9.500 10 9.500 10M62 826l-9.500 10 9.500 10" ${stroke}/>`);
  out += button(291, `<path d="M280 836h22M291 825v22" ${stroke}/><circle cx="294" cy="853" r="6" fill="#ee2a22"/>`);
  out += button(409, `<path d="M413.500 826l-10.500 10 10.500 10" ${stroke}/>`);

  [['10.37', 485], ['10.03', 561], ['9.69', 663], ['9.35', 764], ['9.01', 862]].forEach(([t, y]) => {
    out += `<text class="label" x="16" y="${y}">${t}</text>`;
  });
  document.getElementById('kline').innerHTML = out;
}

function drawVolume() {
  let out = '<path class="frame" d="M13 1064V909h444v155"/>';
  volumes.forEach(([up, top], i) => {
    const c = x(i) + 0.8;
    out += up
      ? `<rect x="${c - 5.2}" y="${top + 1}" width="10.600" height="${1061.5 - top}" fill="#fff" stroke="${RED}" stroke-width="1.700"/>`
      : `<rect x="${c - 5.3}" y="${top}" width="11" height="${1063 - top}" fill="${GREEN}"/>`;
  });
  out += lines(volumeAverages);
  out += '<text class="label" x="15" y="938">17.59万</text>';
  document.getElementById('volume').innerHTML = out;

  let ticks = '';
  for (let i = 11; i <= 36; i++) {
    const major = i === 16 || i === 36;
    ticks += `<rect x="${x(i) - 1}" y="1066" width="3" height="${major ? 10 : 6}" fill="${major ? '#999' : '#ddd'}"/>`;
  }
  document.getElementById('ticks').innerHTML = ticks;
}

function drawChips() {
  let out = '<rect class="frame" x="470" y="459.5" width="227" height="406.500"/>';
  trapped.concat(profit).forEach((w, i) => {
    const color = i < trapped.length ? (i % 2 ? '#aed3a6' : '#85bd7b') : (i % 2 ? '#dd8080' : '#e09a9b');
    out += `<rect x="470" y="${461.7 + i * 8.977}" width="${w}" height="2.800" fill="${color}"/>`;
  });
  out += button(527, '<path d="M523 826l10 10-10 10" fill="none" stroke="#999" stroke-width="2.600"/>', '#f6f5f7');
  out += button(645, '<path d="M643 834l-8-8M634.500 836v-10.500h10M648 838l8 8M656.500 836.500v10.500h-10.500" fill="none" stroke="#dc7030" stroke-width="2.600"/>');
  document.getElementById('chips').innerHTML = out;
}

function drawQr() {
  const n = 57;
  let seed = 20251118;
  const next = () => (seed = (seed * 1103515245 + 12345) % 2147483648) / 2147483648;
  const grid = [];
  for (let r = 0; r < n; r++) {
    grid.push(Array.from({ length: n }, () => next() < 0.5));
  }
  const square = (cy, cx, radius, light) => {
    for (let r = -radius; r <= radius; r++) {
      for (let c = -radius; c <= radius; c++) {
        if (grid[cy + r] && cx + c >= 0 && cx + c < n) {
          grid[cy + r][cx + c] = !light.includes(Math.max(Math.abs(r), Math.abs(c)));
        }
      }
    }
  };
  [[6, 28], [28, 6], [28, 50], [50, 28], [50, 50]].forEach(([r, c]) => square(r, c, 2, [1]));
  [[3, 3], [3, 53], [53, 3]].forEach(([r, c]) => square(r, c, 4, [2, 4]));

  let d = '';
  grid.forEach((row, r) => row.forEach((on, c) => {
    if (on) d += `M${c} ${r}h1v1h-1z`;
  }));
  document.getElementById('qr-code').setAttribute('d', d);
}

drawKline();
drawVolume();
drawChips();
drawQr();
```
